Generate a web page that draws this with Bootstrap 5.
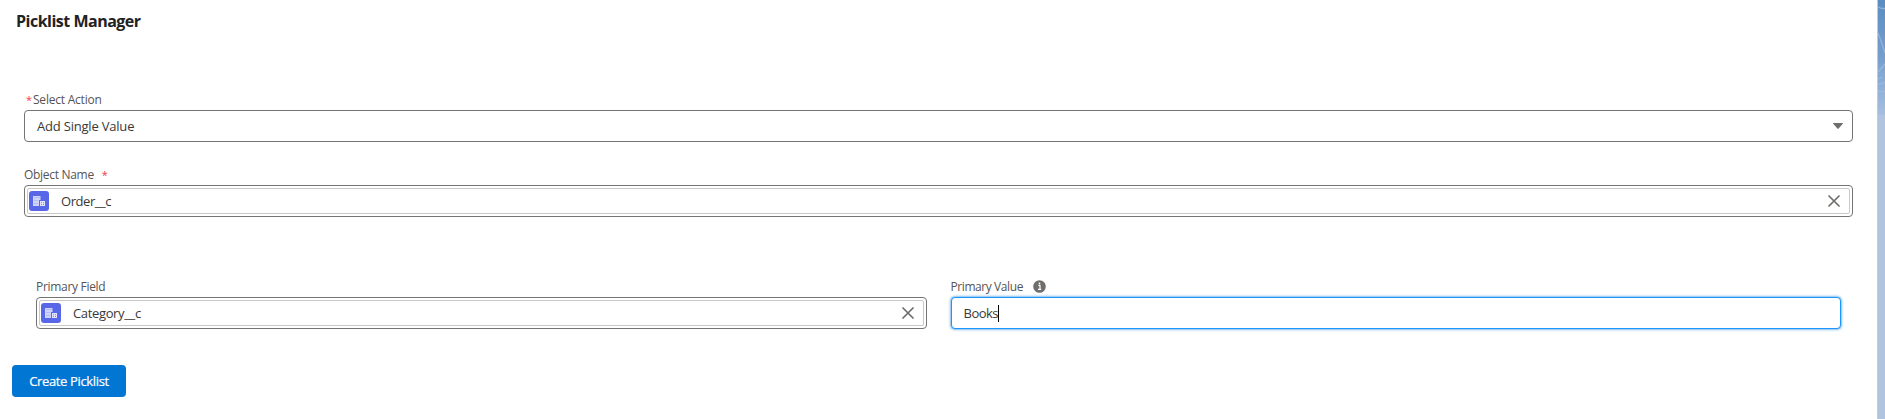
<!DOCTYPE html>
<html lang="en">
<head>
<meta charset="utf-8">
<meta name="viewport" content="width=device-width, initial-scale=1">
<title>Picklist Manager</title>
<link href="https://cdn.jsdelivr.net/npm/bootstrap@5.3.0/dist/css/bootstrap.min.css" rel="stylesheet">
<style>
body{font-family:"Open Sans","Noto Sans",sans-serif;font-size:13px;color:#3a3836;height:419px;overflow:hidden;background:#b0c4df}
.panel{width:1878px;height:419px;border-right:1px solid #c9c9c9}
.sky{width:7px;height:419px}
.title{font-size:16px;line-height:20px;font-weight:700;color:#222;padding:11px 0 0 16px;letter-spacing:-.5px;margin-bottom:60px}
.main-fields{width:1829px}
.lbl{font-size:12px;line-height:18px;height:19px;color:#555;letter-spacing:-.3px;white-space:nowrap}
.req{color:#f03a4c;font-size:11px}
.star{width:5px;margin-left:2px}
.act{letter-spacing:-.22px}
.sel{letter-spacing:-.2px}
.arrow{margin-right:1px}
.obj{margin-top:24px}
.obj .req{margin-left:5px}
.box{height:32px;border:1px solid #747474;border-radius:4px;background:#fff;line-height:30px}
.pill{height:26px;margin:2px;border:1px solid #c9c9c9;border-radius:2px;padding:0 9px 0 1px;line-height:24px}
.pill svg{display:block}
.val{margin-left:12px;letter-spacing:-.45px}
.cat{letter-spacing:-.35px}
.focused{border-color:#1b96ff;box-shadow:0 0 3px #0176d3}
.caret{width:1px;height:17px;background:#000}
.fields{margin:61px 36px 36px;gap:24px;width:1805px}
.fld{width:890.5px}
.pv{letter-spacing:-.42px}
.info{margin:2px 0 0 10px}
.books{margin-left:12px;letter-spacing:-.5px}
.create{width:114px;height:32px;margin-left:12px;background:#0176d3;color:#fff;border-radius:4px;font-size:13px;letter-spacing:-.35px;line-height:30px;-webkit-text-stroke:.2px #fff}
.create:hover{background:#014486;color:#fff}
</style>
</head>
<body class="d-flex">
<svg width="0" height="0" class="position-absolute">
<defs>
<symbol id="building" viewBox="0 0 20 20"><rect width="20" height="20" rx="3" fill="#5867e8"/><path d="M4 5h7.500v4H10v6H4z" fill="#cfd3fa"/><path d="M11 10h5v5h-5z" fill="#e3e5fd"/><path d="M5.500 6.500h5M5.500 9.500h3M5.500 12.500h3" stroke="#8c97f0" stroke-width=".8" stroke-dasharray="1 1"/><path d="M12 11.700h1M14 11.700h1M12 13.500h1M14 13.500h1" stroke="#7582ec" stroke-width=".9"/></symbol>
<symbol id="cross" viewBox="0 0 12 12"><path d="M1 1l10 10M11 1L1 11" stroke="#706e6b" stroke-width="1.700" fill="none" stroke-linecap="round"/></symbol>
</defs>
</svg>
<main class="panel bg-white flex-shrink-0">
<h1 class="title">Picklist Manager</h1>
<div class="mx-4 main-fields">
<label class="lbl d-flex"><span class="req star me-1">*</span><span class="act" style="margin-left:-2px">Select Action</span></label>
<div class="box d-flex align-items-center justify-content-between px-2 sel"><span class="ms-1">Add Single Value</span>
<svg width="10" height="6" class="arrow" viewBox="0 0 10 6"><path d="M.3 0h9.400q.5.200.100.700L5.600 5.600q-.6.600-1.200 0L.2.700Q-.2.200.3 0z" fill="#706e6b"/></svg></div>
<label class="lbl d-block obj">Object Name <span class="req">*</span></label>
<div class="box"><div class="pill d-flex align-items-center"><svg width="20" height="20"><use href="#building"/></svg><span class="flex-grow-1 val">Order__c</span><svg width="12" height="12"><use href="#cross"/></svg></div></div>
</div>
<div class="d-flex fields">
<div class="fld"><label class="lbl d-block">Primary Field</label>
<div class="box"><div class="pill d-flex align-items-center"><svg width="20" height="20"><use href="#building"/></svg><span class="flex-grow-1 val cat">Category__c</span><svg width="12" height="12"><use href="#cross"/></svg></div></div></div>
<div class="fld"><label class="lbl d-flex"><span class="pv">Primary Value</span><svg width="13" height="13" viewBox="0 0 13 13" class="info"><circle cx="6.500" cy="6.500" r="6.300" fill="#706e6b"/><path d="M5.300 5.500h1.700v4M5 9.400h3.200" stroke="#fff" stroke-width="1.200" fill="none"/><circle cx="6.500" cy="3.500" r=".9" fill="#fff"/></svg></label>
<div class="box focused d-flex align-items-center"><span class="books">Books</span><span class="caret"></span></div></div>
</div>
<button type="button" class="btn create d-block border-0 p-0">Create Picklist</button>
</main>
<aside class="sky flex-shrink-0"><svg class="d-block" width="7" height="419" viewBox="0 0 7 419"><defs><linearGradient id="air" x2="0" y2="1"><stop stop-color="#5b8dc1"/><stop offset=".5" stop-color="#769fcd"/><stop offset="1" stop-color="#a6bfde"/></linearGradient></defs><path fill="#b0c4df" d="M0 0h7v419H0z"/><path fill="url(#air)" d="M0 0h7v115H0z"/><path d="M0 7l4 1.500H7M0 33q4 10 7 20M0 72l7-8M0 79l4-2M0 85l7-3M0 91.500h7" stroke="#a5c1e1" stroke-opacity=".65" fill="none" stroke-width="1.300"/></svg></aside>
<script src="https://cdn.jsdelivr.net/npm/bootstrap@5.3.0/dist/js/bootstrap.bundle.min.js"></script>
</body>
</html>
